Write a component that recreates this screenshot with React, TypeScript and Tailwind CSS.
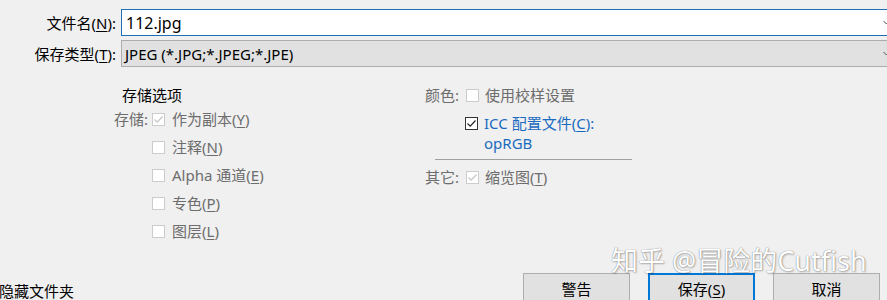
import React from 'react';

const font = "font-['Noto_Sans','Noto_Sans_CJK_SC',sans-serif]";

const Box: React.FC<{ checked?: boolean; disabled?: boolean }> = ({ checked, disabled }) => (
  <span
    className={`flex h-[13px] w-[13px] shrink-0 items-center justify-center border bg-white ${
      disabled ? 'border-[#cccccc]' : checked ? 'border-[#333333]' : 'border-[#cccccc]'
    }`}
  >
    {checked && (
      <svg width="11" height="11" viewBox="0 0 11 11" fill="none">
        <path
          d="M1.5 5.5 L4.2 8.2 L9.5 2.5"
          stroke={disabled ? '#c4c4c4' : '#222222'}
          strokeWidth="1.2"
        />
      </svg>
    )}
  </span>
);

const Chevron = () => (
  <svg className="ml-auto mr-[-3px] shrink-0" width="7" height="5" viewBox="0 0 7 5" fill="none">
    <path d="M0.5 1 L3.5 4 L6.5 1" stroke="#555555" strokeWidth="1" />
  </svg>
);

const Underlined: React.FC<{ pre: string; key_: string }> = ({ pre, key_ }) => (
  <>
    {pre}(<span className="underline underline-offset-2">{key_}</span>)
  </>
);

const Row: React.FC<{ label?: string; checked?: boolean; disabled?: boolean; children: React.ReactNode }> = ({
  label,
  checked,
  disabled,
  children,
}) => (
  <div className="flex h-[28px] items-center">
    <span className="w-[38px] text-[#6d6d6d]">{label}</span>
    <Box checked={checked} disabled={disabled} />
    <span className="ml-[7px] text-[#6d6d6d]">{children}</span>
  </div>
);

const Button: React.FC<{ primary?: boolean; children: React.ReactNode }> = ({ primary, children }) => (
  <div
    className={`flex h-[32px] w-[107px] items-center justify-center bg-[#e1e1e1] text-black ${
      primary ? 'border-2 border-[#0078d7]' : 'border border-[#adadad]'
    }`}
  >
    {children}
  </div>
);

export default function App() {
  return (
    <div className={`relative h-[300px] w-[887px] overflow-hidden bg-[#f0f0f0] text-[15px] leading-[20px] text-black ${font}`}>
      <div className="flex flex-col gap-[4px] pt-[9px]">
        <div className="flex items-center">
          <span className="w-[116px] text-right">
            文件名(<span className="underline underline-offset-2">N</span>):
          </span>
          <div className="ml-[5px] flex h-[27px] flex-1 items-center border border-r-0 border-[#1d6fb8] bg-white pl-[4px] text-[16px]">
            112.jpg
            <Chevron />
          </div>
        </div>
        <div className="flex items-center">
          <span className="w-[116px] text-right">
            保存类型(<span className="underline underline-offset-2">T</span>):
          </span>
          <div className="ml-[5px] flex h-[27px] flex-1 items-center border border-r-0 border-[#adadad] bg-[#e1e1e1] pl-[3px]">
            JPEG (*.JPG;*.JPEG;*.JPE)
            <Chevron />
          </div>
        </div>
      </div>

      <div className="mt-[18px] flex">
        <div className="ml-[114px] w-[311px]">
          <div className="h-[20px] pl-[8px]">存储选项</div>
          <Row label="存储:" checked disabled>
            <Underlined pre="作为副本" key_="Y" />
          </Row>
          <Row>
            <Underlined pre="注释" key_="N" />
          </Row>
          <Row>
            <Underlined pre="Alpha 通道" key_="E" />
          </Row>
          <Row>
            <Underlined pre="专色" key_="P" />
          </Row>
          <Row>
            <Underlined pre="图层" key_="L" />
          </Row>
        </div>

        <div className="w-[210px]">
          <div className="flex h-[20px] items-center">
            <span className="w-[41px] text-[#6d6d6d]">颜色:</span>
            <Box />
            <span className="ml-[6px] text-[#6d6d6d]">使用校样设置</span>
          </div>
          <div className="mt-[8px] flex">
            <div className="ml-[40px] pt-[4px]">
              <Box checked />
            </div>
            <div className="ml-[6px] text-[#1a6bbf]">
              <div>
                ICC 配置文件(<span className="underline underline-offset-2">C</span>):
              </div>
              <div>opRGB</div>
            </div>
          </div>
          <div className="ml-[10px] mt-[6px] h-px w-[197px] bg-[#a0a0a0]" />
          <div className="mt-[7px] flex h-[20px] items-center">
            <span className="w-[41px] text-[#6d6d6d]">其它:</span>
            <Box checked disabled />
            <span className="ml-[6px] text-[#6d6d6d]">
              缩览图(<span className="underline underline-offset-2">T</span>)
            </span>
          </div>
        </div>
      </div>

      <div className="flex items-start">
        <div className="-ml-[1px] mt-[36px]">隐藏文件夹</div>
        <div className="ml-auto mr-[7px] mt-[28px] flex gap-[18px]">
          <Button>警告</Button>
          <Button primary>
            保存(<span className="underline underline-offset-2">S</span>)
          </Button>
          <Button>取消</Button>
        </div>
      </div>

      <div className="absolute left-[611px] top-[245px] text-[27px] leading-[32px] text-white [text-shadow:0_0_1px_rgba(0,0,0,0.55),1px_1px_2px_rgba(0,0,0,0.25)]">
        知乎 @冒险的Cutfish
      </div>
    </div>
  );
}
